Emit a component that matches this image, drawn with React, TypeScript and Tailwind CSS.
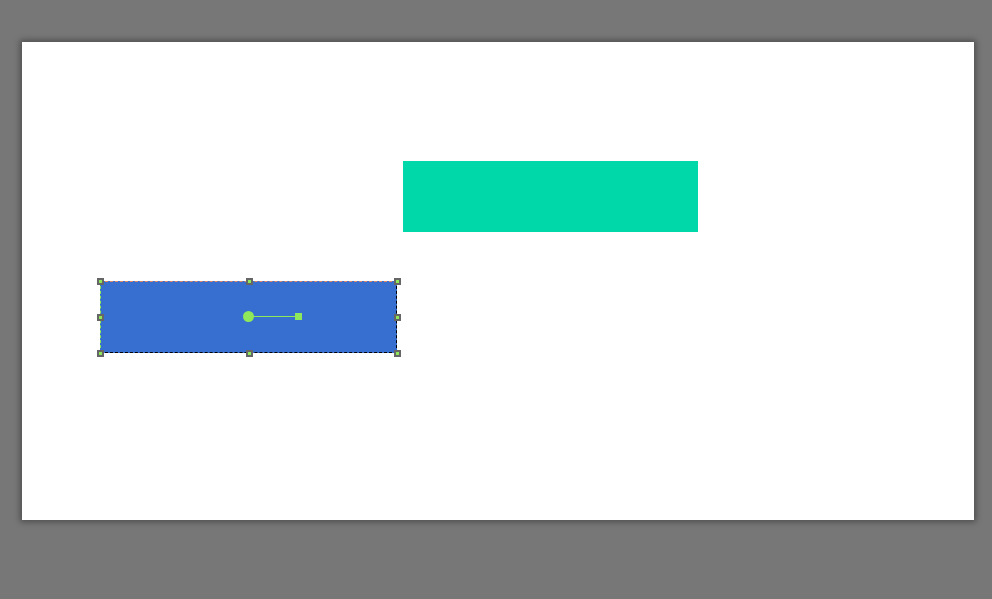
export default function App() {
  const handles: [number, number][] = [
    [0, 0], [50, 0], [100, 0],
    [0, 50], [100, 50],
    [0, 100], [50, 100], [100, 100],
  ];
  return (
    <div className="w-[992px] h-[599px] bg-[#777777] overflow-hidden pt-[42px] pl-[22px]">
      <div className="relative w-[952px] h-[478px] bg-white shadow-[0_0_6px_2px_rgba(0,0,0,0.35)]">
        {/* green rectangle */}
        <div className="absolute left-[381px] top-[119px] w-[295px] h-[71px] bg-[#00d8aa]" />
        {/* selected blue rectangle */}
        <div className="absolute left-[78px] top-[239px] w-[297px] h-[72px] bg-[#376fd0]">
          <div className="absolute inset-0 border-t border-dashed border-t-[#e08a6a]" />
          <div className="absolute inset-0 border-l border-dashed border-l-[#8fe85a]" />
          <div className="absolute inset-0 border-b border-r border-dashed border-b-black border-r-black" />
          {handles.map(([x, y], i) => (
            <div
              key={i}
              className="absolute w-[7px] h-[7px] -ml-[3px] -mt-[3px] bg-[#666666]"
              style={{ left: `${x}%`, top: `${y}%` }}
            >
              <div className="absolute left-[2px] top-[2px] w-[3px] h-[3px] bg-[#8fe85a]" />
            </div>
          ))}
          {/* rotation handle */}
          <div className="absolute left-[148px] top-[35px] w-[50px] h-px bg-[#8fe85a]" />
          <div className="absolute left-[143px] top-[30px] w-[11px] h-[11px] rounded-full bg-[#8fe85a]" />
          <div className="absolute left-[195px] top-[32px] w-[7px] h-[7px] bg-[#8fe85a]" />
        </div>
      </div>
    </div>
  );
}
